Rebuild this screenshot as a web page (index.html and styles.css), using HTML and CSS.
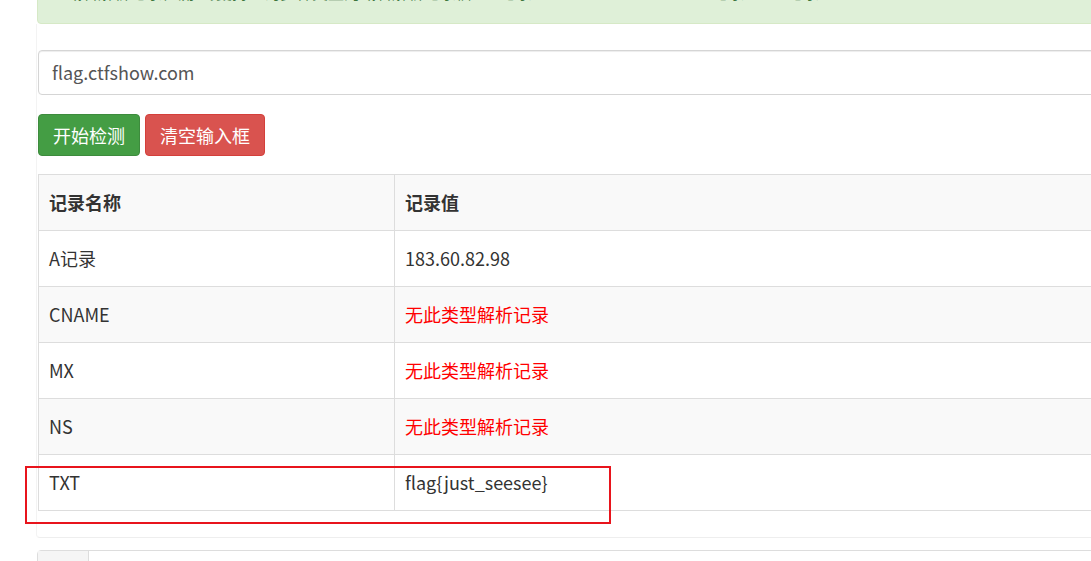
FILE: index.html
```html
<!DOCTYPE html>
<html lang="zh-CN">
<head>
<meta charset="utf-8">
<title>DNS 记录查询</title>
<link rel="stylesheet" href="styles.css">
</head>
<body>
<div class="page">
  <div class="alert">
    <span class="seg s1">域名解析记录检测工具</span><span class="seg s2">支持查询多种类型的域名解析记录信息</span><span class="seg s3">A记录</span><span class="seg s4">CNAME</span><span class="seg s5">MX记录</span><span class="seg s6">NS记录</span><span class="seg s7">TXT</span>
  </div>
  <div class="panel">
    <div class="input">flag.ctfshow.com</div>
    <div class="actions">
      <button class="btn btn-success">开始检测</button>
      <button class="btn btn-danger">清空输入框</button>
    </div>
    <table class="records">
      <tr><th class="col-name">记录名称</th><th>记录值</th></tr>
      <tr><td>A记录</td><td>183.60.82.98</td></tr>
      <tr><td>CNAME</td><td class="none">无此类型解析记录</td></tr>
      <tr><td>MX</td><td class="none">无此类型解析记录</td></tr>
      <tr><td>NS</td><td class="none">无此类型解析记录</td></tr>
      <tr><td>TXT</td><td>flag{just_seesee}</td></tr>
    </table>
  </div>
  <div class="next">
    <div class="addon"></div>
    <div class="field"></div>
  </div>
  <div class="mark"></div>
</div>
</body>
</html>
```

FILE: styles.css
```css
html, body {
  margin: 0;
  padding: 0;
  background: #fff;
  overflow: hidden;
}
body {
  font-family: "Noto Sans CJK SC", "Noto Sans", sans-serif;
  color: #333;
  font-size: 18px;
}
.page {
  position: relative;
  display: flow-root;
  width: 1180px;
  padding-left: 36px;
}
.alert {
  margin: -33px 0 0 1px;
  padding: 14px 15px 21px 28px;
  background: #dff0d8;
  border: 1px solid #d6e9c6;
  border-radius: 4px;
  color: #3c763d;
  font-size: 16px;
  line-height: 20px;
  white-space: nowrap;
  display: flex;
}
.seg { display: block; }
.s1 { width: 150px; }
.s2 { width: 274px; }
.s3 { width: 120px; }
.s4 { width: 80px; }
.s5 { width: 76px; }
.s6 { width: 84px; }
.panel {
  border-left: 1px solid #f3f3f3;
  border-bottom: 1px solid #eeeeee;
  border-radius: 0 0 4px 4px;
  padding: 26px 0 26px 1px;
}
.input {
  height: 43px;
  border: 1px solid #d5d5d5;
  border-radius: 4px;
  box-shadow: inset 0 1px 1px rgba(0,0,0,.075);
  padding: 0 13px;
  line-height: 43px;
  color: #555;
}
.actions {
  display: flex;
  gap: 5px;
  margin: 19px 0 18px;
}
.btn {
  font-family: inherit;
  font-size: 18px;
  height: 42px;
  padding: 0 14px;
  border-radius: 4px;
  color: #fff;
  line-height: 40px;
}
.btn-success {
  background: #449d44;
  border: 1px solid #3d8b3d;
}
.btn-danger {
  background: #d9534f;
  border: 1px solid #d43f3a;
}
.records {
  width: 100%;
  border-collapse: collapse;
  border: 1px solid #ddd;
}
.records th, .records td {
  border: 1px solid #ddd;
  padding: 0 10px 2px;
  text-align: left;
  vertical-align: middle;
  height: 53px;
}
.records th {
  font-weight: 700;
}
.records tr:nth-child(odd) {
  background: #f9f9f9;
}
.col-name { width: 335px; }
.none {
  color: #ff0000;
}
.next {
  margin: 12px 0 0 1px;
  display: flex;
  height: 40px;
  border: 1px solid #ddd;
  border-radius: 4px;
}
.addon {
  width: 50px;
  background: #f5f5f5;
  border-right: 1px solid #ddd;
}
.field { flex: 1; }
.mark {
  position: absolute;
  left: 25px;
  top: 466px;
  width: 582px;
  height: 54px;
  border: 2px solid #e8141c;
}
```
